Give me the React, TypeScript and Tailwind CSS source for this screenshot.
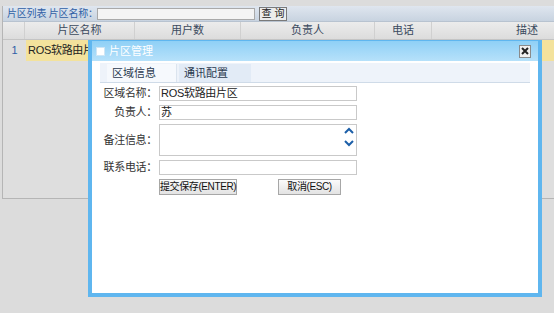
import React from "react";

const font = { fontFamily: '"Liberation Sans", "Noto Sans CJK SC", sans-serif' };

const columns = [
  { label: "片区名称", w: "w-[110px]" },
  { label: "用户数", w: "w-[106px]" },
  { label: "负责人", w: "w-[134px]" },
  { label: "电话", w: "w-[57px]" },
];

const FormRow = ({ label, value, tall }: { label: string; value?: string; tall?: boolean }) => (
  <div className="flex items-center">
    <div className="w-[67px] text-right text-[11px] leading-[15px] text-[#333] pr-[2px] tracking-[-0.3px]">{label}</div>
    {tall ? (
      <div className="relative w-[198px] h-[32px] bg-white border border-[#c9c9c9]">
        <div className="absolute right-[2px] top-[2px] flex flex-col items-center gap-[6px]">
          <svg width="10" height="7" viewBox="0 0 10 7">
            <path d="M1 6 L5 2 L9 6" fill="none" stroke="#1c5fa8" strokeWidth="2" />
          </svg>
          <svg width="10" height="7" viewBox="0 0 10 7">
            <path d="M1 1 L5 5 L9 1" fill="none" stroke="#1c5fa8" strokeWidth="2" />
          </svg>
        </div>
      </div>
    ) : (
      <div className="w-[198px] h-[15px] bg-white border border-[#c9c9c9] text-[11px] leading-[13px] pl-[1px] text-[#222] whitespace-nowrap tracking-[-0.3px]">
        {value}
      </div>
    )}
  </div>
);

export default function App() {
  return (
    <div className="relative w-[554px] h-[313px] bg-[#dcdcdc] overflow-hidden" style={font}>
      {/* grid panel */}
      <div className="pt-[6px] pl-[2px]">
        <div className="h-[193px] border-l border-b border-[#b5b5b5] bg-[#dedede] flex flex-col">
          {/* toolbar */}
          <div className="h-[16px] flex items-center bg-gradient-to-b from-[#dfe6ef] to-[#c8d3e0] border-b border-[#b8c3d0]">
            <span className="w-[94px] text-[10px] text-[#2f5fa6] pl-[4px] whitespace-nowrap tracking-[-0.2px]">片区列表 片区名称：</span>
            <div className="w-[158px] h-[12px] bg-[#f4f4f4] border border-[#a9a9a9]" />
            <div className="ml-[4px] w-[28px] h-[14px] border border-[#7a7a7a] bg-[#ececec] text-[10px] leading-[12px] text-center text-[#222] whitespace-nowrap">查 询</div>
          </div>
          {/* header */}
          <div className="h-[18px] flex bg-gradient-to-b from-[#ececec] to-[#dcdcdc] border-b border-[#c4c4c4] text-[11px] text-[#3b4a5e]">
            <div className="w-[22px] border-r border-[#d0d0d0]" />
            {columns.map((c) => (
              <div key={c.label} className={`${c.w} border-r border-[#d0d0d0] flex items-center justify-center`}>
                {c.label}
              </div>
            ))}
            <div className="flex-1 flex items-center justify-end pr-[16px]">描述</div>
          </div>
          {/* data row */}
          <div className="h-[21px] flex items-center text-[11px]">
            <div className="w-[23px] h-full flex items-center justify-center text-[#2f5fa6]">1</div>
            <div className="flex-1 h-full bg-[#f3e29c] flex items-center pl-[2px] text-[#222] tracking-[-0.3px]">ROS软路由片区</div>
          </div>
        </div>
      </div>

      {/* dialog */}
      <div className="absolute left-[88px] top-[40px] w-[454px] h-[257px] border-[4px] border-t-[1px] border-[#5fb6ef] bg-white flex flex-col">
        <div className="h-[20px] flex items-center bg-gradient-to-b from-[#8fd0f6] to-[#b6e1fa] px-[4px]">
          <div className="w-[9px] h-[9px] bg-white border border-[#cfe6f5] mr-[4px]" />
          <span className="text-[11px] text-white">片区管理</span>
          <div className="ml-auto mr-[3px] w-[12px] h-[13px] bg-[#f0f0f0] border border-[#8a8a8a] flex items-center justify-center">
            <svg width="8" height="8" viewBox="0 0 8 8">
              <path d="M1 1 L7 7 M7 1 L1 7" stroke="#222" strokeWidth="2" />
            </svg>
          </div>
        </div>
        <div className="mx-[8px] mt-[2px] h-[20px] flex items-end bg-[#eef3fa] border-b border-[#cfdbe8] pl-[7px]">
          <div className="w-[70px] h-[18px] flex items-center pl-[5px] text-[11px] text-[#2b3a4f] bg-[#f6f9fd] border-r border-[#dbe4ee]">区域信息</div>
          <div className="w-[72px] h-[18px] flex items-center pl-[5px] text-[11px] text-[#2b3a4f] bg-[#e2ebf6] ml-[2px]">通讯配置</div>
        </div>
        <div className="flex flex-col gap-[4px] mt-[3px]">
          <FormRow label="区域名称：" value="ROS软路由片区" />
          <FormRow label="负责人：" value="苏" />
          <FormRow label="备注信息：" tall />
          <FormRow label="联系电话：" value="" />
          <div className="flex pl-[67px] gap-[41px]">
            <div className="w-[78px] h-[16px] border border-[#a7a7a7] bg-gradient-to-b from-[#fbfbfb] to-[#e3e3e3] text-[10px] leading-[14px] text-center text-[#111] whitespace-nowrap tracking-[-0.4px]">提交保存(ENTER)</div>
            <div className="w-[63px] h-[16px] border border-[#a7a7a7] bg-gradient-to-b from-[#fbfbfb] to-[#e3e3e3] text-[10px] leading-[14px] text-center text-[#111] whitespace-nowrap tracking-[-0.4px]">取消(ESC)</div>
          </div>
        </div>
      </div>
    </div>
  );
}
